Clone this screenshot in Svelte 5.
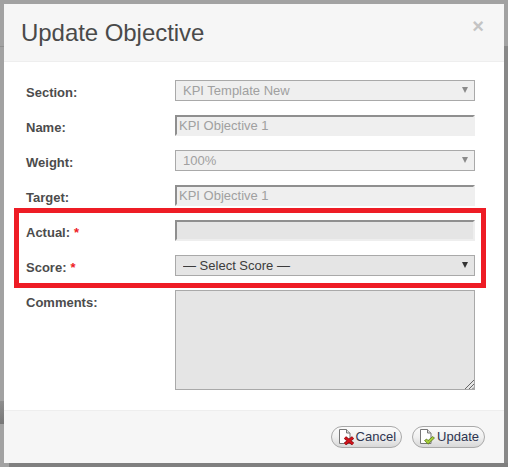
<script>
  const rows = [
    { label: 'Section:', kind: 'select', value: 'KPI Template New', off: true },
    { label: 'Name:', kind: 'input', value: 'KPI Objective 1', off: true },
    { label: 'Weight:', kind: 'select', value: '100%', off: true },
    { label: 'Target:', kind: 'input', value: 'KPI Objective 1', off: true },
    { label: 'Actual:', kind: 'input', value: '', req: true },
    { label: 'Score:', kind: 'select', value: '— Select Score —', req: true }
  ];
</script>

<div class="page">
  <span class="back top-left"></span>
  <span class="back right"></span>
  <span class="back bottom-left"></span>
  <span class="back bottom"></span>
  <div class="dialog">
    <header>
      <h1>Update Objective</h1>
      <span class="close">×</span>
    </header>
    <div class="body">
      {#each rows as r}
        <div class="row">
          <label for={r.label}>{r.label}{#if r.req}<em>*</em>{/if}</label>
          {#if r.kind === 'select'}
            <div class="sel" class:off={r.off}>
              <select id={r.label} disabled={r.off}><option>{r.value}</option></select>
              <span class="arrow"></span>
            </div>
          {:else}
            <input id={r.label} class:off={r.off} value={r.value} disabled={r.off} />
          {/if}
        </div>
      {/each}
      <div class="row last">
        <label for="comments">Comments:</label>
        <div class="ta">
          <textarea id="comments"></textarea>
          <svg class="grip" viewBox="0 0 10 10" width="10" height="10">
            <path d="M1 10 10 1M5 10 10 5M8.5 10 10 8.5" stroke="#666" fill="none" />
          </svg>
        </div>
      </div>
    </div>
    <footer>
      <button>
        <svg viewBox="0 0 16 16" width="16" height="16">
          <path d="M.5 .5H7.5L11 4V14.5H.5Z" fill="#fff" stroke="#777" />
          <path d="M7.5 .5V4H11" fill="#ddd" stroke="#777" />
          <path d="M6 8.5 14 15M14 8.5 6 15" stroke="#7d1015" stroke-width="3.4" fill="none" />
          <path d="M6 8.5 14 15M14 8.5 6 15" stroke="#d3141c" stroke-width="2.2" fill="none" />
        </svg>
        <span>Cancel</span>
      </button>
      <button>
        <svg viewBox="0 0 16 16" width="16" height="16">
          <path d="M.5 .5H7.5L11 4V14.5H.5Z" fill="#fff" stroke="#777" />
          <path d="M7.5 .5V4H11" fill="#ddd" stroke="#777" />
          <path d="M4.5 11.5 6.7 10 8 11.6 12.6 7.6 14.5 9 8 15.2Z" fill="#a6ce39" stroke="#4d6b12" stroke-width=".7" />
        </svg>
        <span>Update</span>
      </button>
    </footer>
  </div>
  <div class="highlight"></div>
</div>

<style>
  :global(body) {
    margin: 0;
    background: #a0a0a0;
  }
  .page {
    position: relative;
    width: 508px;
    height: 467px;
    box-sizing: border-box;
    padding: 4px;
    overflow: hidden;
    background: #a2a2a2;
    font-family: "Liberation Sans", Arial, sans-serif;
  }
  .back {
    position: absolute;
  }
  .top-left { left: 0; top: 46px; width: 4px; height: 1px; background: #8f8f8f; }
  .right { right: 0; top: 46px; width: 4px; bottom: 0; background: #888; }
  .bottom-left {
    left: 0;
    top: 401px;
    width: 4px;
    height: 23px;
    background: linear-gradient(#8e8e8e, #777);
  }
  .bottom { left: 9px; right: 0; bottom: 0; height: 4px; background: #7f7f7f; }
  .dialog {
    position: relative;
    width: 500px;
    height: 459px;
    display: flex;
    flex-direction: column;
    background: #fff;
  }
  header {
    height: 58px;
    flex: none;
    box-sizing: border-box;
    padding: 0 17px;
    display: flex;
    justify-content: space-between;
    background: #f6f6f6;
    border-bottom: 1px solid #eee;
  }
  h1 {
    margin: 0;
    padding-top: 15px;
    font-size: 24px;
    line-height: 28px;
    font-weight: 400;
    letter-spacing: -0.05px;
    color: #4a4a4a;
  }
  .close {
    margin: 10px 0 0;
    padding-right: 3px;
    font-size: 20px;
    line-height: 24px;
    font-weight: 700;
    color: #c4c4c4;
  }
  .body {
    flex: 1;
    padding: 18px 29px 0 22px;
    display: flex;
    flex-direction: column;
    gap: 14px;
  }
  .row {
    display: grid;
    grid-template-columns: 149px 300px;
    height: 21px;
  }
  .row.last { height: 100px; }
  label {
    font-size: 13px;
    line-height: 25px;
    font-weight: 700;
    color: #4c4c4c;
  }
  .row.last label { line-height: 26px; }
  em {
    margin-left: 4px;
    font-style: normal;
    font-weight: 700;
    color: #ee1c25;
  }
  .sel {
    position: relative;
    height: 21px;
  }
  select {
    appearance: none;
    width: 100%;
    height: 21px;
    box-sizing: border-box;
    display: block;
    border: 1px solid #a9a9a9;
    border-radius: 0;
    padding: 0 0 0 7px;
    background: #e5e5e5;
    font: 13px "Liberation Sans", Arial, sans-serif;
    color: #3c3c3c;
    opacity: 1;
  }
  .sel.off select {
    background: #efefef;
    color: #a0a0a0;
  }
  .arrow {
    position: absolute;
    right: 7px;
    top: 7px;
    width: 0;
    height: 0;
    border-left: 3.5px solid transparent;
    border-right: 3.5px solid transparent;
    border-top: 6px solid #333;
  }
  .sel.off .arrow { border-top-color: #8a8a8a; }
  input {
    width: 300px;
    height: 21px;
    box-sizing: border-box;
    display: block;
    padding: 0 0 0 2px;
    border-style: solid;
    border-width: 2px;
    border-color: #8f8f8f #eee #eee #8f8f8f;
    background: #e5e5e5;
    font: 13px "Liberation Sans", Arial, sans-serif;
    outline: 0;
  }
  input.off {
    background: #efefef;
    border-color: #8f8f8f #efefef #efefef #8f8f8f;
    color: #a0a0a0;
    opacity: 1;
  }
  .ta {
    position: relative;
    height: 100px;
  }
  textarea {
    width: 300px;
    height: 100px;
    box-sizing: border-box;
    display: block;
    resize: none;
    border: 1px solid #a9a9a9;
    background: #e5e5e5;
    outline: 0;
  }
  .grip {
    position: absolute;
    right: 1px;
    bottom: 1px;
  }
  footer {
    height: 53px;
    flex: none;
    box-sizing: border-box;
    padding: 15px 19px 0 0;
    display: flex;
    justify-content: flex-end;
    align-items: flex-start;
    gap: 10px;
    background: #f6f6f6;
    border-top: 1px solid #eee;
  }
  button {
    height: 22px;
    box-sizing: border-box;
    padding: 0 5px 0 7px;
    display: flex;
    align-items: center;
    gap: 1px;
    border: 1px solid #a9a9a9;
    border-radius: 11px;
    background: linear-gradient(#fbfbfb, #f0f0f0 50%, #d8d8d8);
    font: 13px "Liberation Sans", Arial, sans-serif;
    color: #2e3550;
  }
  button span {
    margin-top: -2px;
  }
  .highlight {
    position: absolute;
    left: 14px;
    top: 208px;
    width: 472px;
    height: 80px;
    box-sizing: border-box;
    border: 5px solid #ee1c25;
    pointer-events: none;
  }
</style>
